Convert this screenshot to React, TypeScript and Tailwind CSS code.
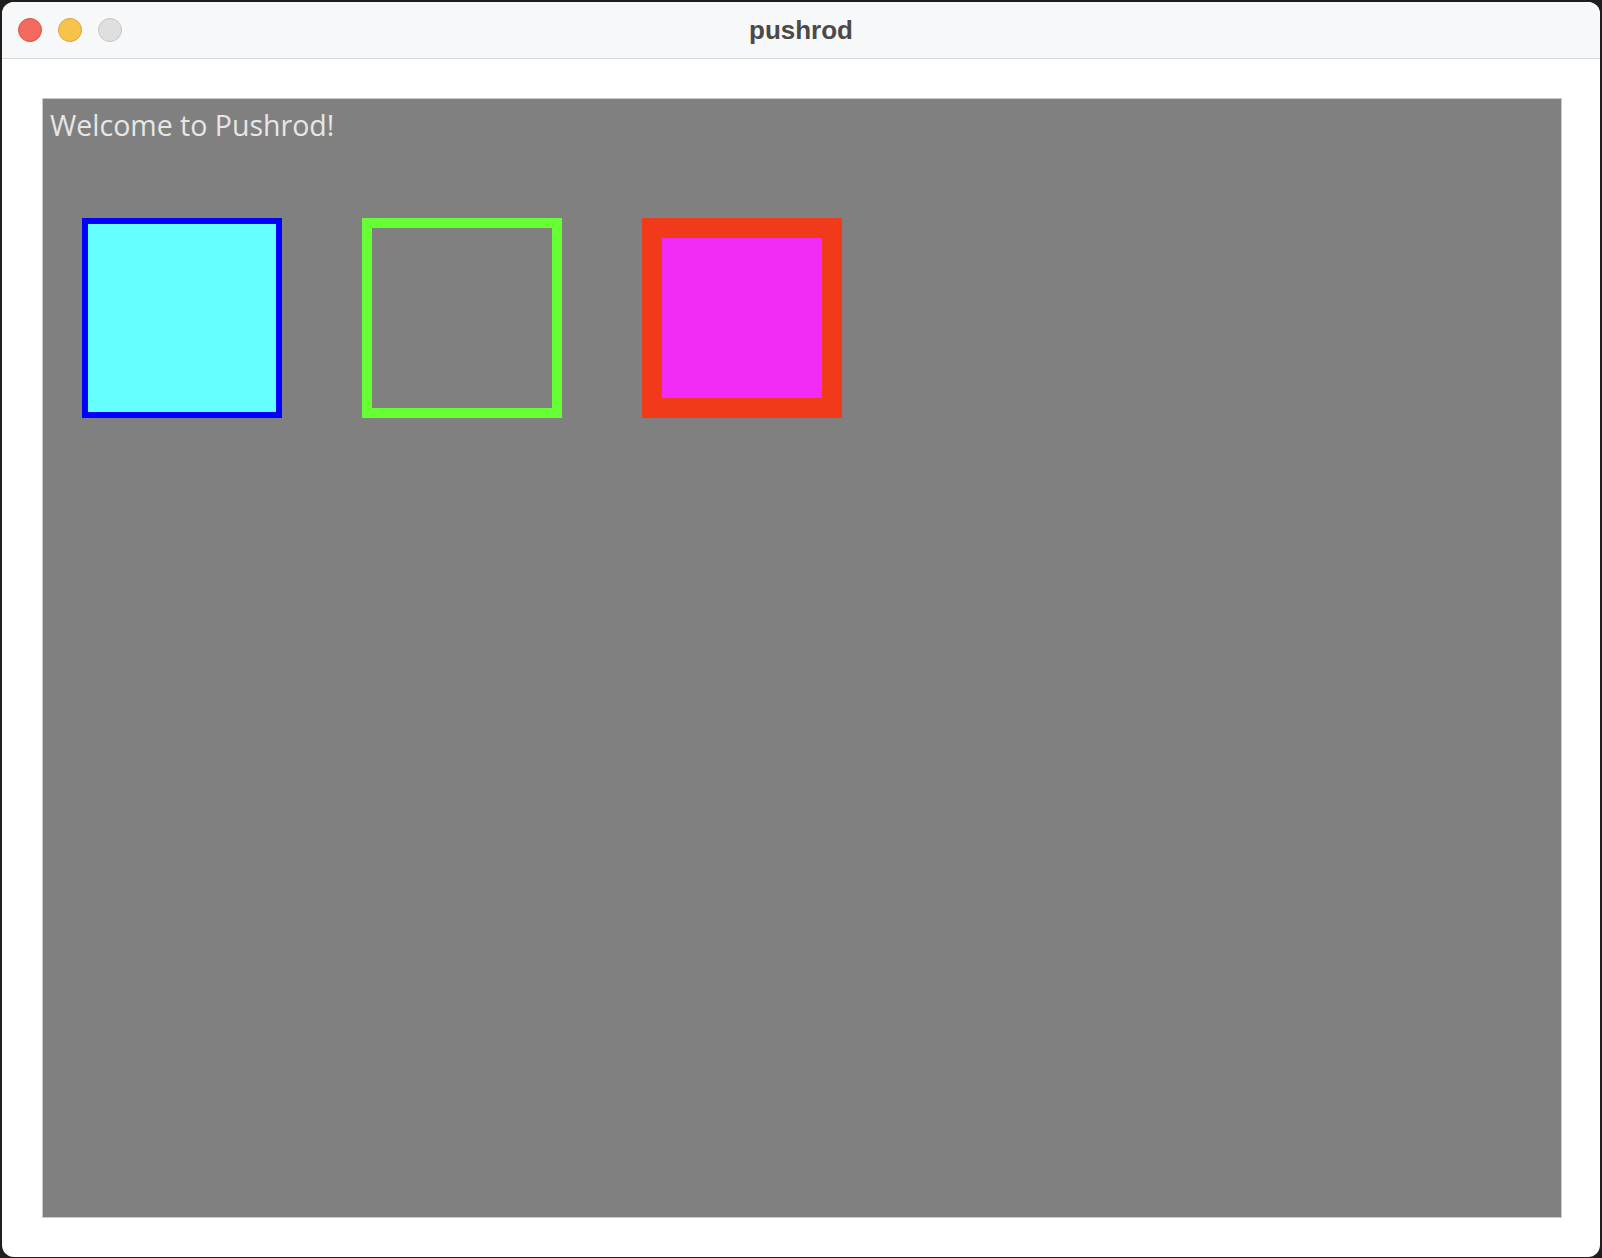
export default function App() {
  return (
    <div className="w-[1602px] h-[1258px] bg-[#1e1e1e] p-[2px] pr-[2px] pb-[1px]">
      <div className="flex h-full w-full flex-col overflow-hidden rounded-[12px] bg-white">
        {/* title bar */}
        <div className="relative flex h-[57px] shrink-0 items-center border-b border-[#d6d7d9] bg-[#f7f8fa] pl-[16px]">
          <div className="flex gap-[16px]">
            <span className="h-[24px] w-[24px] rounded-full border border-[#de5145] bg-[#f26b5e]" />
            <span className="h-[24px] w-[24px] rounded-full border border-[#dea23a] bg-[#f7c34b]" />
            <span className="h-[24px] w-[24px] rounded-full border border-[#c6c6c6] bg-[#dfdfe0]" />
          </div>
          <div className="absolute inset-0 flex items-center justify-center font-['Liberation_Sans',Arial,sans-serif] text-[26px] font-bold text-[#4a4a4a]">
            pushrod
          </div>
        </div>

        {/* content */}
        <div className="pl-[40px] pt-[39px]">
          <div className="h-[1120px] w-[1520px] border border-[#c9c9c9] bg-[#808080]">
            <div className="h-[119px] pl-[7px] pt-[7px] font-['Open_Sans',sans-serif] text-[28.5px] leading-[38px] text-[#e6e6e6]">
              Welcome to Pushrod!
            </div>
            <div className="flex gap-[80px] pl-[39px]">
              <div className="h-[200px] w-[200px] border-[6px] border-[#0000ff] bg-[#66ffff]" />
              <div className="h-[200px] w-[200px] border-[10px] border-[#66ff33]" />
              <div className="h-[200px] w-[200px] border-[20px] border-[#f03a1a] bg-[#f22cf6]" />
            </div>
          </div>
        </div>
      </div>
    </div>
  );
}
